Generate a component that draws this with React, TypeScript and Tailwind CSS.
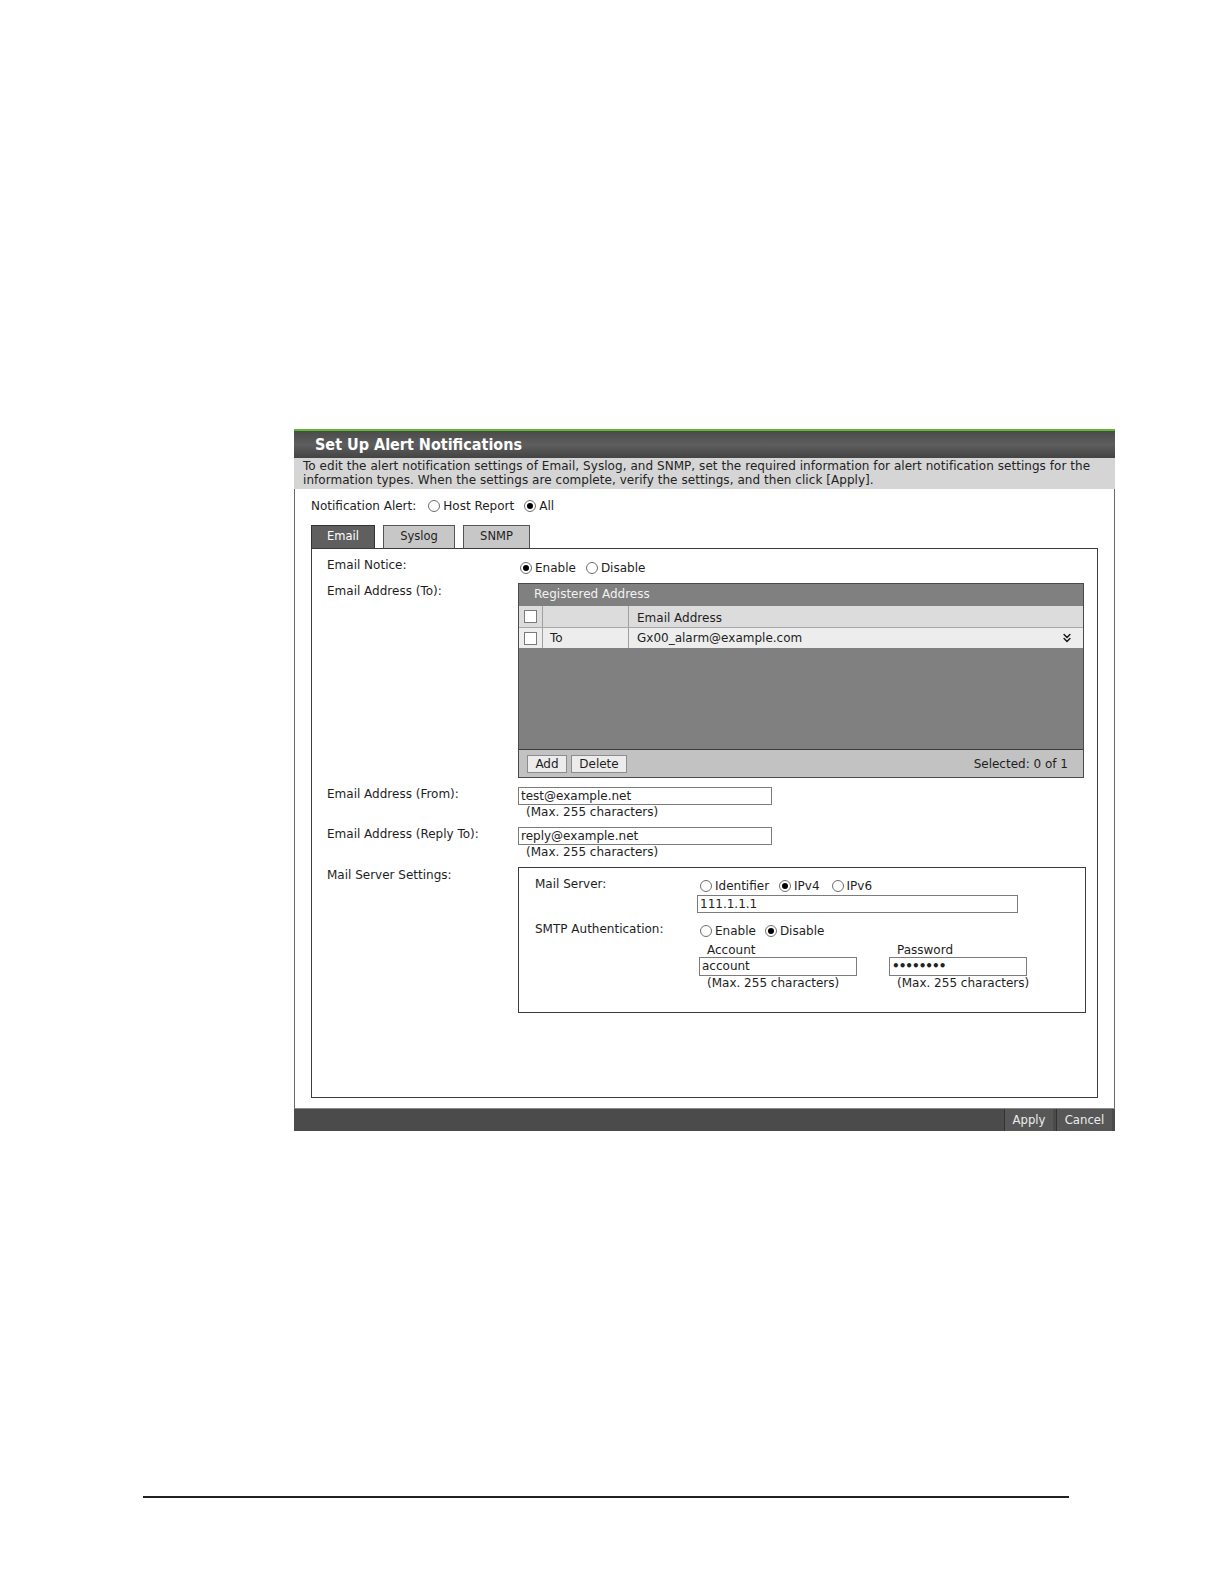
import { ChevronsDown } from "lucide-react";

function Radio({ checked }: { checked?: boolean }) {
  return (
    <span className="inline-flex items-center justify-center w-[12px] h-[12px] rounded-full border border-[#6e6e6e] bg-white mr-[3px] shrink-0">
      {checked && <span className="w-[6px] h-[6px] rounded-full bg-black" />}
    </span>
  );
}

function Check() {
  return <span className="inline-block w-[13px] h-[13px] border border-[#7a7a7a] bg-white" />;
}

function Field({ value, w, h = 18, dots }: { value: string; w: number; h?: number; dots?: boolean }) {
  return (
    <div
      className={
        dots
          ? "border border-[#7c7c7c] bg-white pl-[2px] text-[12px] leading-[16px] font-bold tracking-[-1px] text-[#222]"
          : "border border-[#7c7c7c] bg-white pl-[2px] text-[12px] leading-[16px] text-[#222]"
      }
      style={{ width: w, height: h }}
    >
      {value}
    </div>
  );
}

export default function App() {
  return (
    <div className="h-[1584px] w-full overflow-hidden bg-white font-['DejaVu_Sans',sans-serif] text-[#1e1e1e]">
      <div className="pt-[429px] pl-[294px]">
        <div className="w-[821px]">
          {/* title bar */}
          <div className="h-[2px] bg-[#5cb82c]" />
          <div className="h-[27px] bg-gradient-to-b from-[#4a4a4a] via-[#5e5e5e] to-[#444] pl-[21px] flex items-center">
            <span className="font-['DejaVu_Sans_Condensed','DejaVu_Sans',sans-serif] font-bold text-[16px] text-white">
              Set Up Alert Notifications
            </span>
          </div>
          <div className="h-[31px] bg-[#d5d5d5] px-[9px] pt-[1px] text-[12px] leading-[14px] tracking-[0.05px] text-[#222] whitespace-nowrap">
            To edit the alert notification settings of Email, Syslog, and SNMP, set the required information for alert notification settings for the
            <br />
            information types. When the settings are complete, verify the settings, and then click [Apply].
          </div>

          {/* body */}
          <div className="border-x border-[#6a6a6a] px-[16px] pt-[9px] pb-[10px]">
            <div className="flex items-center h-[16px] text-[12px]">
              <span>Notification Alert:</span>
              <span className="ml-[12px] flex items-center">
                <Radio />
                Host Report
              </span>
              <span className="ml-[10px] flex items-center">
                <Radio checked />
                All
              </span>
            </div>

            {/* tabs */}
            <div className="flex mt-[11px] h-[23px] text-[11.5px]">
              <div className="w-[64px] bg-[#5f5f5f] border border-b-0 border-[#333] text-white flex items-center justify-center">
                Email
              </div>
              <div className="ml-[8px] w-[72px] bg-[#c7c7c7] border border-b-0 border-[#555] flex items-center justify-center">
                Syslog
              </div>
              <div className="ml-[8px] w-[67px] bg-[#c7c7c7] border border-b-0 border-[#555] flex items-center justify-center">
                SNMP
              </div>
            </div>

            <div className="h-[550px] border border-[#3c3c3c] pl-[15px] pt-[8px] text-[12px]">
              {/* Email notice */}
              <div className="flex">
                <div className="w-[191px] leading-[16px]">Email Notice:</div>
                <div className="flex items-center mt-[3px] h-[16px] pl-[2px]">
                  <Radio checked />
                  Enable
                  <span className="ml-[10px] flex items-center">
                    <Radio />
                    Disable
                  </span>
                </div>
              </div>

              {/* To */}
              <div className="flex mt-[7px]">
                <div className="w-[191px] leading-[16px]">Email Address (To):</div>
                <div className="w-[566px] border border-[#4a4a4a]">
                  <div className="h-[22px] bg-[#808080] text-[#f2f2f2] pl-[15px] leading-[20px]">
                    Registered Address
                  </div>
                  <div className="flex h-[22px] bg-[#dcdcdc] border-b border-[#a8a8a8]">
                    <div className="w-[24px] border-r border-[#a0a0a0] flex items-center justify-center">
                      <Check />
                    </div>
                    <div className="w-[86px] border-r border-[#a0a0a0]" />
                    <div className="flex-1 pl-[8px] flex items-center pt-[2px]">Email Address</div>
                  </div>
                  <div className="flex h-[20px] bg-[#ededed]">
                    <div className="w-[24px] border-r border-[#a0a0a0] flex items-center justify-center">
                      <Check />
                    </div>
                    <div className="w-[86px] border-r border-[#a0a0a0] pl-[7px] flex items-center">To</div>
                    <div className="flex-1 pl-[8px] pr-[9px] flex items-center justify-between">
                      <span>Gx00_alarm@example.com</span>
                      <ChevronsDown size={14} strokeWidth={2.5} className="text-[#1a1a1a]" />
                    </div>
                  </div>
                  <div className="h-[102px] bg-[#808080] border-b border-[#3a3a3a]" />
                  <div className="h-[27px] bg-[#c2c2c2] flex items-center pl-[8px] pr-[15px]">
                    <div className="w-[40px] h-[18px] bg-[#ececec] border border-[#8c8c8c] flex items-center justify-center">
                      Add
                    </div>
                    <div className="ml-[4px] w-[56px] h-[18px] bg-[#ececec] border border-[#8c8c8c] flex items-center justify-center">
                      Delete
                    </div>
                    <span className="ml-auto">Selected: 0 of 1</span>
                  </div>
                </div>
              </div>

              {/* From */}
              <div className="flex mt-[9px]">
                <div className="w-[191px] leading-[16px] -mt-[1px]">Email Address (From):</div>
                <div>
                  <Field value="test@example.net" w={254} />
                  <div className="pl-[8px] leading-[14px]">(Max. 255 characters)</div>
                </div>
              </div>

              {/* Reply To */}
              <div className="flex mt-[8px]">
                <div className="w-[191px] leading-[16px] -mt-[1px]">Email Address (Reply To):</div>
                <div>
                  <Field value="reply@example.net" w={254} />
                  <div className="pl-[8px] leading-[14px]">(Max. 255 characters)</div>
                </div>
              </div>

              {/* Mail server */}
              <div className="flex mt-[8px]">
                <div className="w-[191px] leading-[16px]">Mail Server Settings:</div>
                <div className="w-[568px] h-[146px] border border-[#3c3c3c] pl-[16px] pt-[9px]">
                  <div className="flex">
                    <div className="w-[162px] leading-[14px]">Mail Server:</div>
                    <div>
                      <div className="flex items-center h-[16px] mt-[1px] pl-[3px]">
                        <Radio />
                        Identifier
                        <span className="ml-[10px] flex items-center">
                          <Radio checked />
                          IPv4
                        </span>
                        <span className="ml-[12px] flex items-center">
                          <Radio />
                          IPv6
                        </span>
                      </div>
                      <div className="mt-[1px]">
                        <Field value="111.1.1.1" w={321} />
                      </div>
                    </div>
                  </div>

                  <div className="flex mt-[9px]">
                    <div className="w-[162px] leading-[14px]">SMTP Authentication:</div>
                    <div>
                      <div className="flex items-center h-[16px] mt-[1px] pl-[3px]">
                        <Radio />
                        Enable
                        <span className="ml-[9px] flex items-center">
                          <Radio checked />
                          Disable
                        </span>
                      </div>
                      <div className="flex mt-[4px]">
                        <div className="w-[192px]">
                          <div className="pl-[10px] leading-[14px]">Account</div>
                          <div className="ml-[2px]">
                            <Field value="account" w={158} h={19} />
                          </div>
                          <div className="pl-[10px] leading-[14px]">(Max. 255 characters)</div>
                        </div>
                        <div>
                          <div className="pl-[8px] leading-[14px]">Password</div>
                          <Field value="••••••••" w={138} h={19} dots />
                          <div className="pl-[8px] leading-[14px]">(Max. 255 characters)</div>
                        </div>
                      </div>
                    </div>
                  </div>
                </div>
              </div>
            </div>
          </div>

          {/* footer */}
          <div className="h-[23px] bg-[#4b4b4b] border-t border-[#8a8a8a] flex justify-end items-stretch pr-[3px] text-[13px] text-[#ececec] font-['DejaVu_Sans_Condensed','DejaVu_Sans',sans-serif]">
            <div className="w-[49px] bg-[#575757] border-l border-[#333] flex items-center justify-center">Apply</div>
            <div className="ml-[3px] w-[56px] bg-[#575757] border-l border-[#333] flex items-center justify-center">
              Cancel
            </div>
          </div>
        </div>
      </div>

      <div className="mt-[365px] ml-[143px] w-[926px] h-[2px] bg-[#222]" />
    </div>
  );
}
